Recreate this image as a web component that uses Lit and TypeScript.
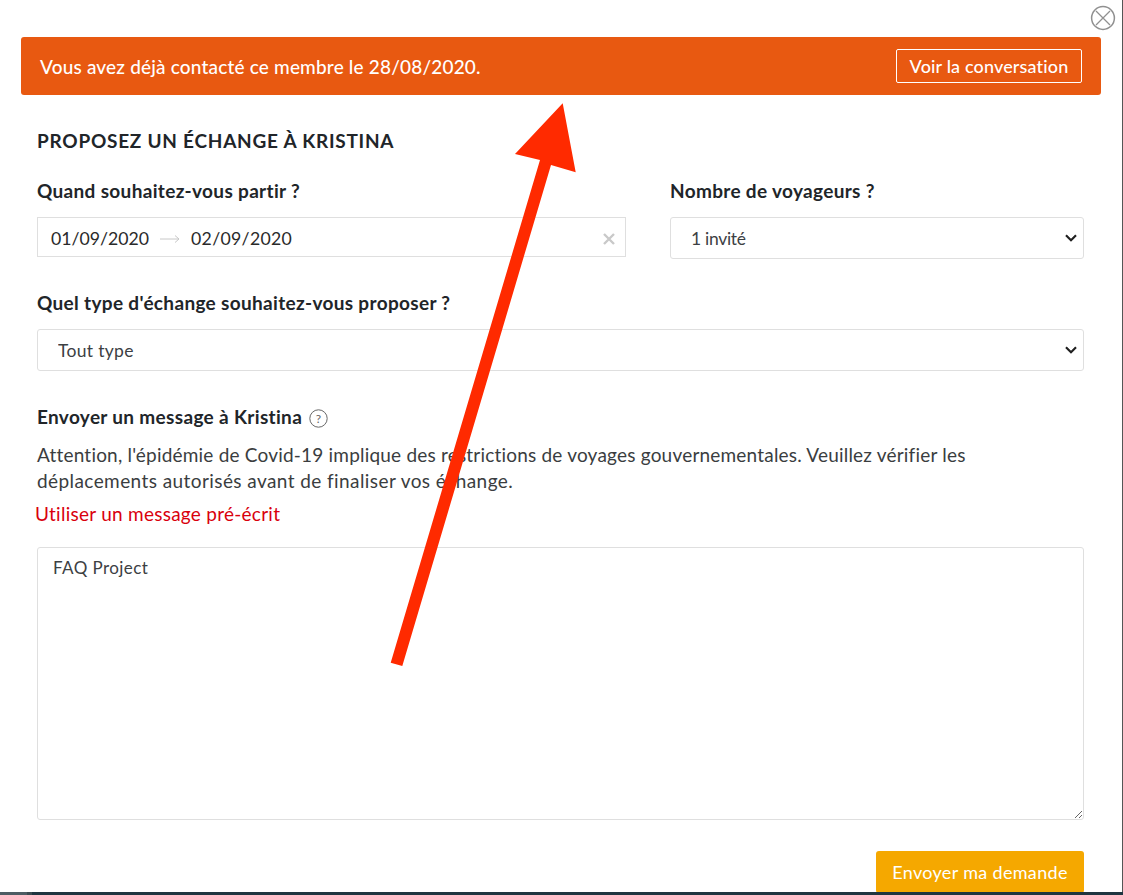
import { LitElement, html, css } from "lit";
import { customElement } from "lit/decorators.js";

@customElement("app-root")
export class AppRoot extends LitElement {
  static styles = css`
    :host { display: block; width: 1123px; height: 895px; overflow: hidden; position: relative; background: #fff;
      font-family: Lato, "Noto Sans", sans-serif; color: #212529; }
    * { box-sizing: border-box; }
    .page { height: 892px; overflow: hidden; border-right: 1px solid #555; padding: 37px 21px 0 21px; }
    .banner { height: 58px; width: 1080px; background: #e85911; border-radius: 3px; display: flex; align-items: center;
      justify-content: space-between; padding: 0 19px 0 19px; color: #fff; font-size: 19px; font-weight: 500; letter-spacing: 0.18px; }
    .banner button { width: 186px; height: 34px; border: 1px solid #fff; border-radius: 2px; background: transparent; color: #fff;
      font: inherit; font-size: 18px; letter-spacing: 0.15px; padding: 0; }
    .body { padding: 0 17px 0 16px; }
    h1 { margin: 34px 0 0; font-size: 19px; line-height: 24px; font-weight: 700; letter-spacing: 0.75px; }
    .top { display: grid; grid-template-columns: 589px 414px; column-gap: 44px; margin-top: 26px; }
    label, .lab { display: block; font-size: 19px; line-height: 24px; font-weight: 700; letter-spacing: 0.33px; }
    .date { margin-top: 14px; height: 40px; border: 1px solid #dfdfdf; display: flex; align-items: center; padding: 3px 0 0 13px;
      font-size: 17.7px; color: #2a2a2a; position: relative; }
    .date .to { letter-spacing: 0.3px; }
    .date svg.arr { margin: 0 11px 0 11px; }
    .date svg.x { margin-left: auto; margin-right: 10px; }
    select { display: block; width: 100%; height: 42px; margin-top: 14px; border: 1px solid #dfdfdf; border-radius: 3px;
      font: inherit; font-size: 17.5px; font-weight: 400; letter-spacing: 0.1px; color: #3c4043; padding: 0 20px; appearance: none;
      background: #fff url("data:image/svg+xml,%3Csvg xmlns='http://www.w3.org/2000/svg' width='12' height='8' fill='none' stroke='%23222' stroke-width='2.2'%3E%3Cpath d='M1 1.2 6 6.2l5-5'/%3E%3C/svg%3E") no-repeat right 6px center; }
    .type { margin-top: 32px; }
    .type select { letter-spacing: 0.3px; }
    .top select { letter-spacing: -0.3px; }
    .msg { margin-top: 34px; display: flex; align-items: center; gap: 7px; }
    .msg svg { margin-top: 3px; }
    p { margin: 13px 0 0; font-size: 19px; line-height: 26px; letter-spacing: 0.2px; color: #3a3d40; }
    p .wide { letter-spacing: 0.42px; }
    .red { margin: 7px 0 0 -2px; font-size: 19px; line-height: 26px; letter-spacing: 0.26px; color: #d9000d; }
    textarea { display: block; width: 100%; height: 273px; margin-top: 20px; border: 1px solid #dfdfdf; border-radius: 3px;
      font: inherit; font-size: 17px; line-height: 24px; letter-spacing: 0.42px; color: #3c4043; padding: 8px 15px; outline: none; }
    .actions { display: flex; justify-content: flex-end; margin-top: 31px; }
    .send { width: 208px; height: 42px; background: #f5a800; border: 0; border-radius: 3px; color: #fff; font: inherit; font-size: 18px; letter-spacing: 0.33px; padding: 0; }
    .foot { height: 3px; display: flex; background: #1f3540; }
    .foot i { display: block; width: 27px; background: #4d5c63; }
    .foot b { display: block; width: 5px; background: #3a4a50; }
    .close { position: absolute; left: 1090px; top: 5px; }
    .arrow { position: absolute; left: 0; top: 0; pointer-events: none; }
  `;

  render() {
    return html`
      <div class="page">
        <div class="banner">
          <span>Vous avez déjà contacté ce membre le 28/08/2020.</span>
          <button>Voir la conversation</button>
        </div>
        <div class="body">
          <h1>PROPOSEZ UN ÉCHANGE À KRISTINA</h1>
          <div class="top">
            <div>
              <label>Quand souhaitez-vous partir ?</label>
              <div class="date">
                <span>01/09/2020</span>
                <svg class="arr" width="20" height="10" viewBox="0 0 20 10" fill="none" stroke="#c8c8c8" stroke-width="1"><path d="M0 5h19M15 1.5 19 5l-4 3.5"/></svg>
                <span class="to">02/09/2020</span>
                <svg class="x" width="12" height="12" viewBox="0 0 12 12" stroke="#c9c9c9" stroke-width="2.4"><path d="M1 1l10 10M11 1 1 11"/></svg>
              </div>
            </div>
            <div>
              <label>Nombre de voyageurs ?</label>
              <select><option>1 invité</option></select>
            </div>
          </div>
          <div class="type">
            <label>Quel type d'échange souhaitez-vous proposer ?</label>
            <select><option>Tout type</option></select>
          </div>
          <div class="msg lab">
            <span>Envoyer un message à Kristina</span>
            <svg width="19" height="19" viewBox="0 0 19 19" fill="none"><circle cx="9.5" cy="9.5" r="8.7" stroke="#666"/><text x="9.5" y="14" text-anchor="middle" font-size="12" font-weight="400" fill="#666">?</text></svg>
          </div>
          <p>Attention, l'épidémie de Covid-19 implique des restrictions de voyages gouvernementales. Veuillez vérifier les<br /><span class="wide">déplacements autorisés avant de finaliser vos échange.</span></p>
          <div class="red">Utiliser un message pré-écrit</div>
          <textarea>FAQ Project</textarea>
          <div class="actions"><button class="send">Envoyer ma demande</button></div>
        </div>
      </div>
      <div class="foot"><i></i><b></b></div>
      <svg class="close" width="26" height="26" viewBox="0 0 26 26" fill="none" stroke="#909090"><circle cx="13" cy="13" r="11.4" stroke-width="1.5"/><path d="M6 6l14 14M20 6 6 20" stroke-width="1.3"/></svg>
      <svg class="arrow" width="1123" height="895"><polygon fill="#ff2a00" points="562.7,103.3 575.7,172.3 551,165 402.3,666 390.7,662.7 540,160 515,154"/></svg>
    `;
  }
}
